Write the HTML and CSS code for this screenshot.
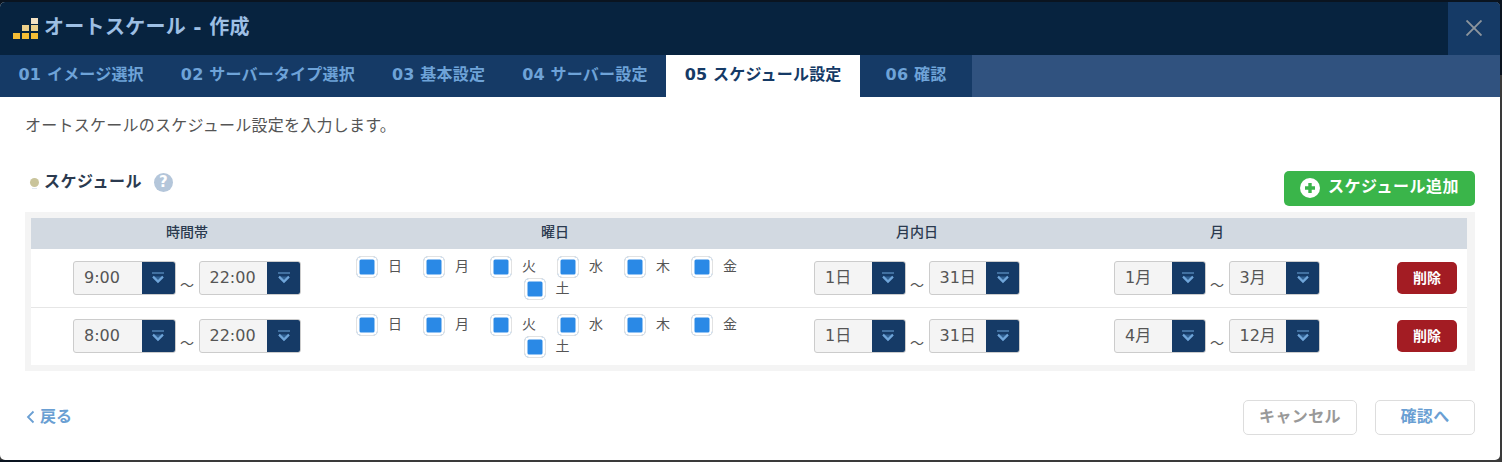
FILE: index.html
```html
<!DOCTYPE html>
<html lang="ja">
<head>
<meta charset="utf-8">
<title>オートスケール - 作成</title>
<link rel="stylesheet" href="styles.css">
</head>
<body>
<svg class="defs" width="0" height="0">
  <symbol id="chev" viewBox="0 0 14 12">
    <path d="M1 1h12" stroke="#6fa5d9" stroke-width="1.2"/>
    <path d="M2 4.5h10L7 10z" fill="#2f5f91"/>
    <path d="M2 4.6L7 9.6L12 4.6" fill="none" stroke="#6fa5d9" stroke-width="2.2"/>
  </symbol>
</svg>
<div class="modal">
  <header class="head">
    <svg class="logo" viewBox="0 0 25 22" width="25" height="22">
      <rect x="0" y="15" width="7" height="6" fill="#f5bd35"/>
      <rect x="9" y="15" width="7" height="6" fill="#f5bd35"/>
      <rect x="18" y="15" width="7" height="6" fill="#f5bd35"/>
      <rect x="9" y="7" width="7" height="6" fill="#ecd08a"/>
      <rect x="18" y="7" width="7" height="6" fill="#ecd08a"/>
      <rect x="18" y="0" width="7" height="6" fill="#f3e2c3"/>
    </svg>
    <h1 class="title">オートスケール - 作成</h1>
    <div class="close">
      <svg viewBox="0 0 16 16" width="16" height="16"><path d="M0.5 0.5L15.5 15.5M15.5 0.5L0.5 15.5" stroke="#8d959d" stroke-width="1.9" fill="none"/></svg>
    </div>
  </header>
  <nav class="tabs">
    <span class="tab">01 イメージ選択</span>
    <span class="tab">02 サーバータイプ選択</span>
    <span class="tab">03 基本設定</span>
    <span class="tab">04 サーバー設定</span>
    <span class="tab active">05 スケジュール設定</span>
    <span class="tab final">06 確認</span>
  </nav>
  <main class="body">
    <p class="intro">オートスケールのスケジュール設定を入力します。</p>
    <div class="section-head">
      <div class="section-title">
        <span class="dot"></span>
        <h2 class="heading">スケジュール</h2>
        <span class="help">?</span>
      </div>
      <button class="add">
        <svg class="add-icon" viewBox="0 0 20 20" width="20" height="20"><circle cx="10" cy="10" r="10" fill="#fff"/><path d="M10 5v10M5 10h10" stroke="#3ab54a" stroke-width="3.4"/></svg>
        <span class="add-label">スケジュール追加</span>
      </button>
    </div>
    <div class="table-wrap">
      <div class="row header">
        <div class="cell">時間帯</div>
        <div class="cell">曜日</div>
        <div class="cell">月内日</div>
        <div class="cell">月</div>
        <div class="cell"></div>
      </div>

      <div class="row line">
        <div class="cell range">
          <div class="select wide"><span class="val">9:00</span><span class="arrow"><svg width="14" height="12"><use href="#chev"/></svg></span></div>
          <span class="tilde">～</span>
          <div class="select wide"><span class="val">22:00</span><span class="arrow"><svg width="14" height="12"><use href="#chev"/></svg></span></div>
        </div>
        <div class="cell days">
          <label class="day"><i class="box"></i>日</label>
          <label class="day"><i class="box"></i>月</label>
          <label class="day"><i class="box"></i>火</label>
          <label class="day"><i class="box"></i>水</label>
          <label class="day"><i class="box"></i>木</label>
          <label class="day"><i class="box"></i>金</label>
          <label class="day"><i class="box"></i>土</label>
        </div>
        <div class="cell range">
          <div class="select"><span class="val">1日</span><span class="arrow"><svg width="14" height="12"><use href="#chev"/></svg></span></div>
          <span class="tilde">～</span>
          <div class="select"><span class="val">31日</span><span class="arrow"><svg width="14" height="12"><use href="#chev"/></svg></span></div>
        </div>
        <div class="cell range">
          <div class="select"><span class="val">1月</span><span class="arrow"><svg width="14" height="12"><use href="#chev"/></svg></span></div>
          <span class="tilde">～</span>
          <div class="select"><span class="val">3月</span><span class="arrow"><svg width="14" height="12"><use href="#chev"/></svg></span></div>
        </div>
        <div class="cell del-cell"><button class="del">削除</button></div>
      </div>

      <div class="row line last">
        <div class="cell range">
          <div class="select wide"><span class="val">8:00</span><span class="arrow"><svg width="14" height="12"><use href="#chev"/></svg></span></div>
          <span class="tilde">～</span>
          <div class="select wide"><span class="val">22:00</span><span class="arrow"><svg width="14" height="12"><use href="#chev"/></svg></span></div>
        </div>
        <div class="cell days">
          <label class="day"><i class="box"></i>日</label>
          <label class="day"><i class="box"></i>月</label>
          <label class="day"><i class="box"></i>火</label>
          <label class="day"><i class="box"></i>水</label>
          <label class="day"><i class="box"></i>木</label>
          <label class="day"><i class="box"></i>金</label>
          <label class="day"><i class="box"></i>土</label>
        </div>
        <div class="cell range">
          <div class="select"><span class="val">1日</span><span class="arrow"><svg width="14" height="12"><use href="#chev"/></svg></span></div>
          <span class="tilde">～</span>
          <div class="select"><span class="val">31日</span><span class="arrow"><svg width="14" height="12"><use href="#chev"/></svg></span></div>
        </div>
        <div class="cell range">
          <div class="select"><span class="val">4月</span><span class="arrow"><svg width="14" height="12"><use href="#chev"/></svg></span></div>
          <span class="tilde">～</span>
          <div class="select"><span class="val">12月</span><span class="arrow"><svg width="14" height="12"><use href="#chev"/></svg></span></div>
        </div>
        <div class="cell del-cell"><button class="del">削除</button></div>
      </div>
    </div>
    <footer class="foot">
      <a class="back"><svg viewBox="0 0 9 14" width="9" height="14"><path d="M7.5 1.5L2 7l5.5 5.5" fill="none" stroke="#6a9fd3" stroke-width="1.8"/></svg>戻る</a>
      <div class="foot-btns">
        <button class="btn cancel">キャンセル</button>
        <button class="btn next">確認へ</button>
      </div>
    </footer>
  </main>
</div>
</body>
</html>
```
FILE: styles.css
```css
* { box-sizing: border-box; }
html, body { margin: 0; height: 462px; overflow: hidden; }
body {
  background:
    linear-gradient(#0a1420, #0a1420) 0 100% / 100px 2px no-repeat,
    linear-gradient(#0a1420 0 75px, #3a3a3a 75px);
  padding: 2px 2px 2px 0;
  font-family: "DejaVu Sans", "Noto Sans CJK JP", sans-serif;
  color: #555;
}
.defs { position: absolute; }
.modal {
  width: 1500px;
  height: 458px;
  background: #fff;
  border-radius: 5px;
  overflow: hidden;
  display: flex;
  flex-direction: column;
}
.head {
  height: 53px;
  background: #07233f;
  display: flex;
  align-items: center;
  padding-left: 13px;
}
.logo { margin-top: 1px; margin-right: 6px; flex: none; }
.title {
  margin: 0;
  flex: 1;
  font-size: 20px;
  font-weight: 700;
  letter-spacing: 0.3px;
  line-height: 51px;
  height: 53px;
  color: #9dbfe4;
}
.close {
  width: 52px;
  height: 53px;
  padding-bottom: 2px;
  background: #153a66;
  display: flex;
  align-items: center;
  justify-content: center;
}
.tabs {
  height: 42px;
  background: #30527f;
  display: flex;
}
.tab {
  background: #153a66;
  color: #6ea3d8;
  font-size: 16px;
  font-weight: 700;
  letter-spacing: 0.2px;
  line-height: 40px;
  padding: 0 18.5px;
}
.tab.active { background: #fff; color: #153a66; }
.tab.final { padding: 0 25.5px; }
.body { flex: 1; padding: 0 25px; display: flex; flex-direction: column; }
.intro { margin: 17px 0 0; font-size: 16px; line-height: 24px; letter-spacing: 0.25px; color: #555; }
.section-head {
  margin-top: 33px;
  height: 41px;
  display: flex;
  justify-content: space-between;
  align-items: flex-start;
}
.section-title { display: flex; align-items: center; height: 24px; margin-left: 5px; margin-top: -1px; }
.dot { position: relative; width: 9px; height: 9px; border-radius: 50%; background: #c9c49b; margin-right: 5px; }
.dot::after {
  content: "";
  position: absolute;
  left: 2px;
  top: 10px;
  width: 5px;
  height: 1px;
  background: #dfe8f1;
}
.heading { margin: 0; font-size: 16px; font-weight: 700; color: #2b3a4f; line-height: 24px; letter-spacing: 0.5px; }
.help {
  width: 19px;
  height: 19px;
  margin-left: 12px;
  border-radius: 50%;
  background: #b4c6da;
  color: #fff;
  font-size: 15px;
  font-weight: 700;
  line-height: 19px;
  text-align: center;
}
.add {
  width: 191px;
  height: 35px;
  margin: 0;
  padding: 0 0 0 16px;
  border: 0;
  border-radius: 5px;
  background: #3ab54a;
  color: #fff;
  font: 700 16px "DejaVu Sans", "Noto Sans CJK JP", sans-serif;
  letter-spacing: 0.5px;
  display: flex;
  align-items: center;
  gap: 8px;
}
.add-icon { margin-bottom: 2px; }
.add-label { line-height: 20px; margin-bottom: 3px; }
.table-wrap {
  height: 159px;
  background: #f4f4f4;
  padding: 6px 8px 6px 6px;
}
.row {
  display: grid;
  grid-template-columns: 312px 424px 300px 300px 100px;
  background: #fff;
}
.header { height: 31px; background: #d2d9e1; margin-bottom: 0; }
.header .cell {
  text-align: center;
  font-size: 14px;
  font-weight: 500;
  line-height: 29px;
  color: #2b3a4f;
}
.line { height: 58px; }
.line.last { border-top: 1px solid #e6e6e6; }
.last .range { padding-top: 11px; }
.last .days { padding-top: 6px; }
.last .del-cell { padding-top: 12px; }
.range { display: flex; justify-content: center; align-items: flex-start; padding-top: 12px; }
.select {
  width: 91.5px;
  height: 34px;
  border: 1px solid #ccc;
  border-radius: 3px;
  background: #f4f4f4;
  display: flex;
  overflow: hidden;
}
.select.wide { width: 102.5px; }
.val { flex: 1; padding-left: 10px; font-size: 16px; line-height: 32px; color: #555; }
.arrow {
  width: 33px;
  background: #153a66;
  display: flex;
  align-items: center;
  justify-content: center;
}
.tilde { width: 23px; text-align: center; font-size: 14px; line-height: 18px; margin-top: 15px; color: #555; }
.days {
  display: flex;
  flex-wrap: wrap;
  justify-content: center;
  align-content: flex-start;
  padding: 7px 1px 0 0;
  column-gap: 5px;
}
.day {
  display: flex;
  width: 62px;
  height: 22px;
  font-size: 14px;
  line-height: 20px;
  color: #555;
}
.box {
  width: 22px;
  height: 22px;
  margin-right: 10px;
  border: 1px solid #e2e2e2;
  border-radius: 5px;
  background: #2a89e6;
  box-shadow: inset 0 0 0 2.5px #fff;
}
.del-cell { padding: 13px 0 0 30px; }
.del {
  width: 60px;
  height: 32px;
  padding: 0 0 2px;
  border: 0;
  border-radius: 5px;
  background: #a31c23;
  color: #fff;
  font: 700 14px "DejaVu Sans", "Noto Sans CJK JP", sans-serif;
}
.foot {
  margin-top: 29px;
  display: flex;
  justify-content: space-between;
  align-items: flex-start;
}
.back {
  display: flex;
  align-items: center;
  gap: 5px;
  margin-left: 1px;
  margin-top: 5px;
  font-size: 16px;
  font-weight: 700;
  line-height: 24px;
  color: #6a9fd3;
}
.foot-btns { display: flex; gap: 18px; }
.btn {
  height: 35px;
  padding: 0 0 6px;
  border: 1px solid #ddd;
  border-radius: 5px;
  background: #fff;
  font: 700 16px "DejaVu Sans", "Noto Sans CJK JP", sans-serif;
  letter-spacing: 0.4px;
}
.cancel { width: 114px; color: #999; }
.next { width: 100px; color: #6a9fd3; }
```
